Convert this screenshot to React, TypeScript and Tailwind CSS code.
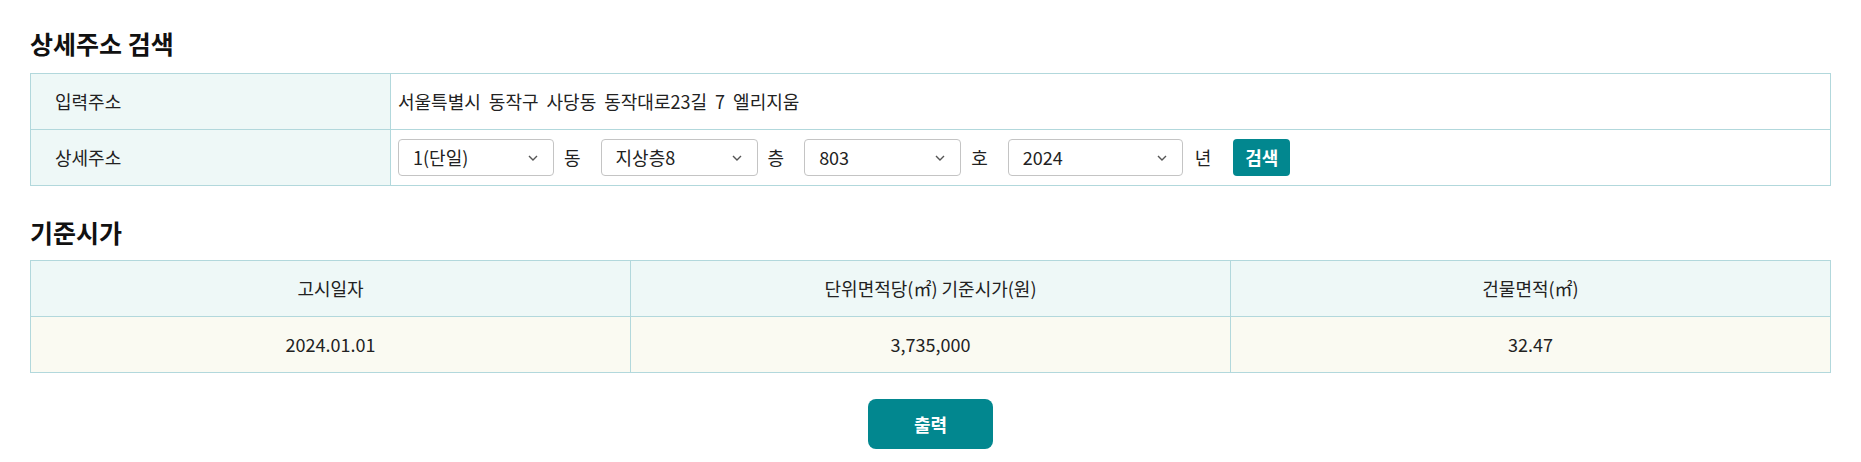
import { ReactNode } from "react";

function Select({ value, width }: { value: string; width: string }) {
  return (
    <div className={`relative h-[37px] ${width}`}>
      <select
        defaultValue={value}
        className="h-full w-full appearance-none rounded-[4px] border border-[#c4c4c4] bg-white pl-[14px] pr-8 text-[18px] text-[#222] outline-none"
      >
        <option>{value}</option>
      </select>
      <svg
        className="pointer-events-none absolute right-[16px] top-1/2 -translate-y-1/2"
        width="10"
        height="6"
        viewBox="0 0 10 6"
        fill="none"
      >
        <path d="M1 1l4 4 4-4" stroke="#555" strokeWidth="1.4" />
      </svg>
    </div>
  );
}

function Unit({ children, last }: { children: ReactNode; last?: boolean }) {
  return (
    <span className={`text-[18px] text-[#222] ${last ? "ml-[12px] mr-[22px]" : "ml-[10px] mr-[20px]"}`}>{children}</span>
  );
}

export default function App() {
  return (
    <div className="bg-white px-[30px] pt-[28px] pb-[14px] font-['Noto_Sans_CJK_KR',sans-serif] text-[#222]">
      <h2 className="mb-[15px] text-[25px] font-bold leading-[30px] text-[#111]">상세주소 검색</h2>
      <table className="w-full border-collapse text-[18px]">
        <tbody>
          <tr className="h-[56px]">
            <th className="w-[20%] border border-[#b2d8dc] bg-[#eef8f7] pl-[24px] text-left font-normal">
              입력주소
            </th>
            <td className="border border-[#b2d8dc] pl-[7px] [word-spacing:4px]">
              서울특별시 동작구 사당동 동작대로23길 7 엘리지움
            </td>
          </tr>
          <tr className="h-[56px]">
            <th className="border border-[#b2d8dc] bg-[#eef8f7] pl-[24px] text-left font-normal">상세주소</th>
            <td className="border border-[#b2d8dc] pl-[7px]">
              <div className="flex items-center">
                <Select value="1(단일)" width="w-[156px]" />
                <Unit>동</Unit>
                <Select value="지상층8" width="w-[157px]" />
                <Unit>층</Unit>
                <Select value="803" width="w-[157px]" />
                <Unit>호</Unit>
                <Select value="2024" width="w-[175px]" />
                <Unit last>년</Unit>
                <button className="h-[37px] w-[57px] rounded-[4px] bg-[#02878f] text-[18px] font-bold text-white">
                  검색
                </button>
              </div>
            </td>
          </tr>
        </tbody>
      </table>

      <h2 className="mt-[31px] mb-[13px] text-[25px] font-bold leading-[30px] text-[#111]">기준시가</h2>
      <table className="w-full table-fixed border-collapse text-center text-[18px]">
        <thead>
          <tr className="h-[56px] bg-[#eef8f7]">
            <th className="border border-[#b2d8dc] font-normal">고시일자</th>
            <th className="border border-[#b2d8dc] font-normal">단위면적당(㎡) 기준시가(원)</th>
            <th className="border border-[#b2d8dc] font-normal">건물면적(㎡)</th>
          </tr>
        </thead>
        <tbody>
          <tr className="h-[56px] bg-[#fafaf2]">
            <td className="border border-[#b2d8dc]">2024.01.01</td>
            <td className="border border-[#b2d8dc]">3,735,000</td>
            <td className="border border-[#b2d8dc]">32.47</td>
          </tr>
        </tbody>
      </table>

      <div className="mt-[26px] flex justify-center">
        <button className="h-[50px] w-[125px] rounded-[8px] bg-[#02878f] text-[18px] font-bold text-white">
          출력
        </button>
      </div>
    </div>
  );
}
